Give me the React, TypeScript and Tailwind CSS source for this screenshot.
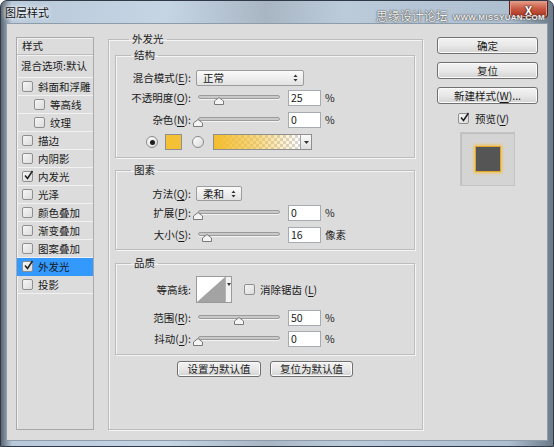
import React from 'react';

type StyleItem = { label: string; checked?: boolean; indent?: boolean; active?: boolean };

const STYLE_ITEMS: StyleItem[] = [
  { label: '斜面和浮雕' },
  { label: '等高线', indent: true },
  { label: '纹理', indent: true },
  { label: '描边' },
  { label: '内阴影' },
  { label: '内发光', checked: true },
  { label: '光泽' },
  { label: '颜色叠加' },
  { label: '渐变叠加' },
  { label: '图案叠加' },
  { label: '外发光', checked: true, active: true },
  { label: '投影' },
];

const BTN =
  'flex items-center justify-center rounded-[3px] border border-[#707070] bg-linear-to-b from-[#f3f3f3] via-[#e8e8e8] to-[#d3d3d3] shadow-[inset_0_0_0_1px_#fbfbfb]';

function CheckBox({ checked = false }: { checked?: boolean }) {
  return (
    <span className="relative flex h-[11px] w-[11px] shrink-0 items-center justify-center rounded-[2px] border border-[#8e8f8f] bg-linear-to-br from-[#f6f6f6] to-[#dcdcdc]">
      {checked && (
        <svg width="11" height="11" viewBox="0 0 11 11" className="absolute -top-[2px] left-[0px]">
          <path d="M2 5.5 L4.5 8.5 L9.5 1" fill="none" stroke="#1e1e1e" strokeWidth="1.5" />
        </svg>
      )}
    </span>
  );
}

function Radio({ on = false }: { on?: boolean }) {
  return (
    <span className="flex h-[12px] w-[12px] shrink-0 items-center justify-center rounded-full border border-[#8a8a8a] bg-linear-to-br from-[#ffffff] to-[#d8d8d8]">
      {on && <span className="h-[5px] w-[5px] rounded-full bg-[#1e1e1e]" />}
    </span>
  );
}

function Label({ name, k }: { name: string; k: string }) {
  return (
    <span className="w-[75px] shrink-0 text-right">
      {name}(<span className="underline underline-offset-2">{k}</span>):
    </span>
  );
}

function UpDown() {
  return (
    <svg width="5" height="8" viewBox="0 0 5 8">
      <path d="M2.5 0.5 L4.5 3 L0.5 3 Z M0.5 5 L4.5 5 L2.5 7.5 Z" fill="#333" />
    </svg>
  );
}

function Slider({ frac }: { frac: number }) {
  return (
    <div className="relative ml-[2px] h-[16px] w-[92px] shrink-0">
      <div className="absolute left-[5px] top-[5px] h-[4px] w-[82px] rounded-full border border-[#9b9b9b] bg-[#c9c9c9] shadow-[0_1px_0_#f4f4f4]" />
      <svg
        width="10"
        height="8"
        viewBox="0 0 10 8"
        className="absolute top-[7px]"
        style={{ left: Math.round(frac * 82) }}
      >
        <path d="M5 0.5 L9.5 4 L9.5 7.5 L0.5 7.5 L0.5 4 Z" fill="#f4f4f4" stroke="#7a7a7a" />
      </svg>
    </div>
  );
}

function Field({ value }: { value: string }) {
  return (
    <div className="ml-[3px] flex h-[16px] w-[33px] shrink-0 items-center border border-[#a6abb3] bg-white pl-[2px]">
      {value}
    </div>
  );
}

function SliderRow({
  name,
  k,
  value,
  frac,
  unit = '%',
  className = '',
}: {
  name: string;
  k: string;
  value: string;
  frac: number;
  unit?: string;
  className?: string;
}) {
  return (
    <div className={`flex h-[16px] items-center ${className}`}>
      <Label name={name} k={k} />
      <Slider frac={frac} />
      <Field value={value} />
      <span className="ml-[4px]">{unit}</span>
    </div>
  );
}

function Group({
  title,
  className,
  children,
}: {
  title: string;
  className: string;
  children: React.ReactNode;
}) {
  return (
    <fieldset
      className={`w-[300px] border border-[#bcbcbc] shadow-[inset_1px_1px_0_#f4f4f4,1px_1px_0_#f4f4f4] ${className}`}
    >
      <legend className="ml-[15px] px-[3px] leading-[14px]">{title}</legend>
      {children}
    </fieldset>
  );
}

export default function App() {
  return (
    <div className="flex h-[447px] w-[554px] flex-col overflow-hidden rounded-t-[7px] border border-[#2f3a46] bg-[linear-gradient(90deg,#5b6774_0%,#b9c9d9_2%,#c6d5e4_30%,#a8b6c4_48%,#bccbda_62%,#aebfd0_92%,#6c7a88_100%)] font-[family-name:'Noto_Sans_CJK_SC','Microsoft_YaHei',sans-serif] text-[10.5px] text-[#1a1a1a]">
      {/* 标题栏 */}
      <div className="relative flex h-[23px] shrink-0 items-center pl-[4px]">
        <span className="text-[11px] leading-none text-[#111] [text-shadow:0_0_6px_#fff,0_0_3px_#fff]">图层样式</span>
        <div className="ml-auto mr-[5px] flex h-[18px] w-[39px] -translate-y-[1px] items-center justify-center self-start rounded-b-[4px] border border-t-0 border-[#5a2020] bg-linear-to-b from-[#e8a796] via-[#c95a44] to-[#a8301c] shadow-[inset_0_0_0_1px_#e89a88]">
          <span className="translate-y-[1px] text-[12px] font-bold leading-[12px] text-white [text-shadow:0_0_1px_#3a0a0a,0_0_2px_#3a0a0a]">
            X
          </span>
        </div>
        <div className="absolute right-[8px] top-[8px] flex items-end gap-[5px] text-[#f0f0f0] [text-shadow:0_0_1px_#333,0_0_2px_#555]">
          <span className="text-[12px] leading-[14px]">思缘设计论坛</span>
          <span className="font-['Liberation_Sans',sans-serif] text-[8px] font-bold leading-[11px] tracking-[0.3px]">
            WWW.MISSYUAN.COM
          </span>
        </div>
      </div>

      {/* 内容区 */}
      <div className="mx-[6px] flex h-[416px] shrink-0 items-start bg-[#dcdcdc] pl-[9px] shadow-[0_0_0_1px_#8d9cab]">
        {/* 左侧样式列表 */}
        <div className="mt-[13px] h-[393px] w-[78px] shrink-0 border border-[#a9a9a9] shadow-[inset_1px_1px_0_#f2f2f2]">
          <div className="flex h-[17px] items-center border-b border-[#bdbdbd] pl-[5px]">样式</div>
          <div className="flex h-[23px] items-center overflow-hidden whitespace-nowrap border-b border-[#f2f2f2] pl-[4px] shadow-[inset_0_1px_0_#f2f2f2]">
            混合选项:默认
          </div>
          {STYLE_ITEMS.map((item) => (
            <div
              key={item.label}
              className={`flex h-[18px] items-center gap-[5px] overflow-hidden whitespace-nowrap border-b ${
                item.active ? 'border-[#3399ff] bg-[#3399ff]' : 'border-[#f1f1f1]'
              } ${item.indent ? 'pl-[17px]' : 'pl-[5px]'}`}
            >
              <CheckBox checked={item.checked} />
              <span>{item.label}</span>
            </div>
          ))}
        </div>

        {/* 外发光 */}
        <fieldset className="ml-[14px] mt-[8px] flex h-[398px] w-[315px] shrink-0 flex-col border border-[#bcbcbc] pl-[6px] shadow-[inset_1px_1px_0_#f4f4f4,1px_1px_0_#f4f4f4]">
          <legend className="ml-[14px] px-[3px] leading-[14px]">外发光</legend>

          <Group title="结构" className="mt-[2px] h-[110px]">
            <div className="flex flex-col pt-[8px]">
              <div className="flex h-[16px] items-center">
                <Label name="混合模式" k="E" />
                <div className="ml-[5px] flex h-[16px] w-[108px] items-center justify-between rounded-[2px] border border-[#9c9c9c] bg-linear-to-b from-[#fbfbfb] to-[#e2e2e2] pl-[6px] pr-[5px]">
                  <span>正常</span>
                  <UpDown />
                </div>
              </div>
              <SliderRow name="不透明度" k="O" value="25" frac={0.25} className="mt-[4px]" />
              <SliderRow name="杂色" k="N" value="0" frac={0} className="mt-[6px]" />
              <div className="mt-[6px] flex h-[16px] items-center">
                <span className="ml-[30px]">
                  <Radio on />
                </span>
                <span className="ml-[7px] h-[16px] w-[17px] border border-[#8f8f8f] bg-[#f4c136]" />
                <span className="ml-[10px]">
                  <Radio />
                </span>
                <div className="ml-[9px] flex h-[16px] border border-[#8f8f8f]">
                  <div className="h-full w-[86px] bg-[repeating-conic-gradient(#d6d6d6_0_25%,#ffffff_0_50%)] bg-[length:6px_6px]">
                    <div className="h-full w-full bg-linear-to-r from-[#f3bd2e] via-[#f3bd2e]/60 to-transparent" />
                  </div>
                  <div className="flex w-[11px] items-center justify-center border-l border-[#a0a0a0] bg-linear-to-b from-[#fafafa] to-[#dedede]">
                    <svg width="5" height="3" viewBox="0 0 5 3">
                      <path d="M0 0 L5 0 L2.5 3 Z" fill="#333" />
                    </svg>
                  </div>
                </div>
              </div>
            </div>
          </Group>

          <Group title="图素" className="mt-[5px] h-[87px]">
            <div className="flex flex-col pt-[9px]">
              <div className="flex h-[15px] items-center">
                <Label name="方法" k="Q" />
                <div className="ml-[5px] flex h-[15px] w-[46px] items-center justify-between rounded-[2px] border border-[#9c9c9c] bg-linear-to-b from-[#fbfbfb] to-[#e2e2e2] pl-[6px] pr-[5px]">
                  <span>柔和</span>
                  <UpDown />
                </div>
              </div>
              <SliderRow name="扩展" k="P" value="0" frac={0} className="mt-[4px]" />
              <SliderRow name="大小" k="S" value="16" frac={0.11} unit="像素" className="mt-[6px]" />
            </div>
          </Group>

          <Group title="品质" className="mt-[6px] h-[99px]">
            <div className="flex flex-col pt-[6px]">
              <div className="flex h-[27px] items-center">
                <span className="w-[75px] shrink-0 text-right">等高线:</span>
                <div className="ml-[5px] flex h-[27px] border border-[#9a9a9a] bg-white">
                  <svg width="28" height="25" viewBox="0 0 28 25">
                    <path d="M0 25 L28 0 L28 25 Z" fill="#a3a3a3" />
                  </svg>
                  <div className="flex w-[6px] items-start justify-center border-l border-[#b5b5b5] bg-[#f2f2f2] pt-[6px]">
                    <svg width="4" height="3" viewBox="0 0 4 3">
                      <path d="M0 0 L4 0 L2 3 Z" fill="#333" />
                    </svg>
                  </div>
                </div>
                <span className="ml-[12px]">
                  <CheckBox />
                </span>
                <span className="ml-[5px]">
                  消除锯齿 (<span className="underline underline-offset-2">L</span>)
                </span>
              </div>
              <SliderRow name="范围" k="R" value="50" frac={0.5} className="mt-[7px]" />
              <SliderRow name="抖动" k="J" value="0" frac={0} className="mt-[5px]" />
            </div>
          </Group>

          <div className="mt-[6px] flex justify-center gap-[9px] pr-[7px]">
            <button className={`${BTN} h-[16px] w-[84px]`}>设置为默认值</button>
            <button className={`${BTN} h-[16px] w-[83px]`}>复位为默认值</button>
          </div>
        </fieldset>

        {/* 右侧按钮 */}
        <div className="ml-[14px] mt-[13px] flex w-[101px] shrink-0 flex-col">
          <button className={`${BTN} h-[17px] border-[#3c7fb1] shadow-[inset_0_0_0_1px_#c8e6f8]`}>确定</button>
          <button className={`${BTN} mt-[8px] h-[17px]`}>复位</button>
          <button className={`${BTN} mt-[8px] h-[17px]`}>
            新建样式(<span className="underline underline-offset-2">W</span>)...
          </button>
          <div className="ml-[21px] mt-[9px] flex h-[11px] items-center">
            <CheckBox checked />
            <span className="ml-[6px]">
              预览(<span className="underline underline-offset-2">V</span>)
            </span>
          </div>
          <div className="ml-[23px] mt-[8px] flex h-[54px] w-[55px] items-center justify-center border border-[#c4c4c4] bg-[#d4d4d4] shadow-[inset_1px_1px_0_#bdbdbd]">
            <div className="h-[26px] w-[26px] border border-[#e0a42a] bg-[#555555] shadow-[0_0_3px_1px_#f4c34a]" />
          </div>
        </div>
      </div>
    </div>
  );
}
